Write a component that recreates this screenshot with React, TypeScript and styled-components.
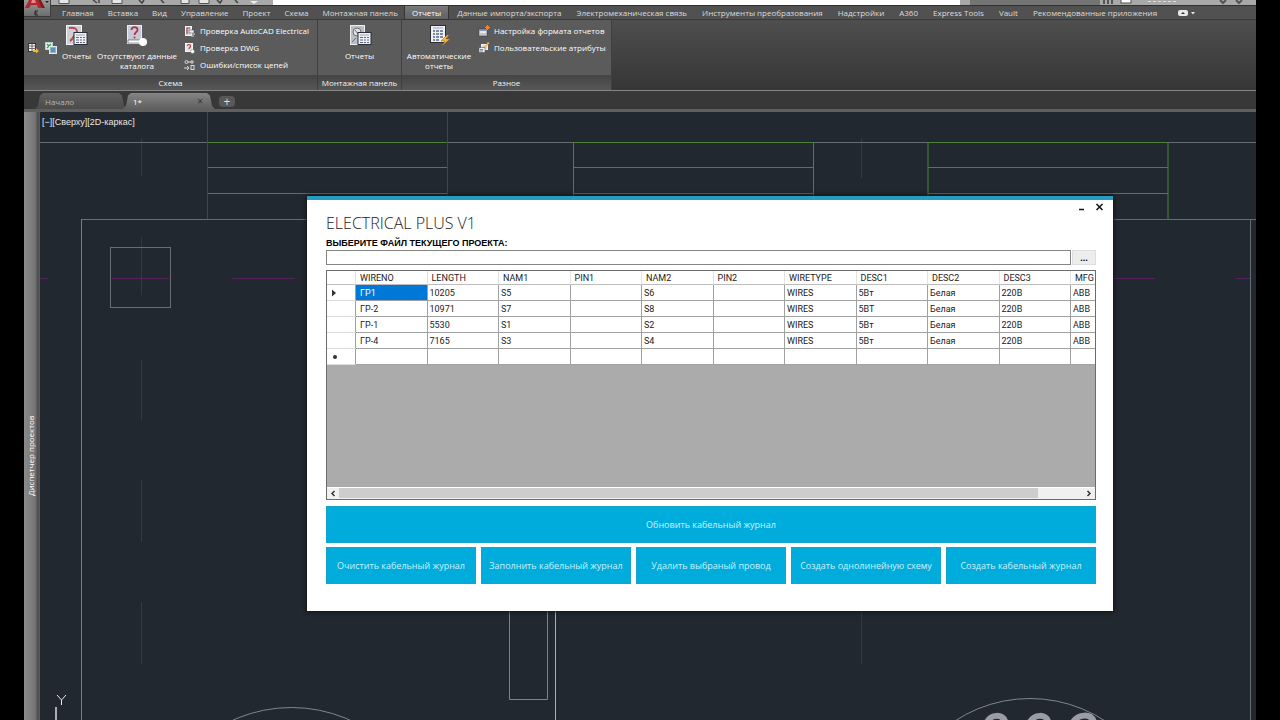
import React from 'react';
import styled, { createGlobalStyle } from 'styled-components';

const uiFont = "'Open Sans', 'Noto Sans', sans-serif";

const GlobalStyle = createGlobalStyle`
  * { box-sizing: border-box; }
  body { margin: 0; background: #000; font-family: ${uiFont}; font-size: 8px; }
  button, input { font: inherit; color: inherit; margin: 0; }
  button { border: 0; padding: 0; background: none; cursor: pointer; }
`;

/* ---------- application frame ---------- */

const AppWindow = styled.div`
  position: relative;
  display: flex;
  flex-direction: column;
  height: 100vh;
  margin: 0 24px;
  overflow: hidden;
  background: #383838;
`;

const QuickAccess = styled.header`
  display: flex;
  height: 5px;
  padding-left: 27px;
  background: #a9a9a9;
`;

const QuickIcons = styled.svg`
  width: 222px;
  height: 5px;
`;

const TitleBox = styled.div`
  flex: 1;
  background: #fff;
`;

const SearchBox = styled.div`
  width: 130px;
  margin-left: 10px;
  background: #747474;
`;

const AccountArea = styled.svg`
  width: 156px;
  height: 5px;
`;

const AppButton = styled.button`
  position: absolute;
  top: 0;
  left: 0;
  width: 27px;
  height: 17px;
  background: linear-gradient(#9a9a9a, #6d6d6d);
  border-right: 1px solid #3f3f3f;
  border-bottom: 1px solid #3a3a3a;
  svg { display: block; }
`;

const MenuBar = styled.nav`
  display: flex;
  align-items: stretch;
  gap: 2px;
  height: 15px;
  padding-left: 31px;
  background: #515151;
  border-top: 1px solid #303030;
  border-bottom: 1px solid #3a3a3a;
  flex: none;
`;

const MenuGroup = styled.div<{ $gap: number }>`
  display: flex;
  gap: ${(p) => p.$gap}px;
`;

const MenuTab = styled.button<{ $active?: boolean }>`
  padding: 0 7px;
  line-height: 13px;
  color: ${(p) => (p.$active ? '#fff' : '#dcdcdc')};
  background: ${(p) => (p.$active ? 'linear-gradient(#7a7a7a, #606060)' : 'none')};
  box-shadow: ${(p) => (p.$active ? '0 0 0 1px #353535' : 'none')};
  white-space: nowrap;
`;

const MenuMore = styled.button`
  margin-left: 12px;
  svg { display: block; }
`;

/* ---------- ribbon ---------- */

const Ribbon = styled.section`
  display: flex;
  flex: none;
  height: 71px;
  background: linear-gradient(#4e4e4e, #363636);
  border-bottom: 1px solid #868686;
`;

const Panel = styled.div<{ $width: number }>`
  display: flex;
  flex-direction: column;
  width: ${(p) => p.$width}px;
  background: #5b5b5b;
  border-right: 1px solid #404040;
`;

const PanelBody = styled.div<{ $center?: boolean }>`
  display: flex;
  flex: 1;
  justify-content: ${(p) => (p.$center ? 'center' : 'flex-start')};
  padding: 4px 4px 0;
`;

const PanelTitle = styled.div`
  height: 15px;
  line-height: 16px;
  text-align: center;
  color: #f4f4f4;
  background: linear-gradient(#444, #575757);
  white-space: nowrap;
`;

const MiniTools = styled.div`
  display: flex;
  gap: 6px;
  padding-top: 18px;
  button { height: 12px; }
  svg { display: block; }
`;

const BigTool = styled.button<{ $width: number }>`
  display: flex;
  flex-direction: column;
  align-items: center;
  width: ${(p) => p.$width}px;
  line-height: 10px;
  color: #fff;
  white-space: pre;
  svg { margin-bottom: 3px; }
`;

const ToolList = styled.div`
  display: flex;
  flex-direction: column;
  padding-left: 6px;
`;

const ToolRow = styled.button`
  display: flex;
  align-items: center;
  gap: 4px;
  height: 17px;
  padding-bottom: 4px;
  color: #fff;
  white-space: nowrap;
`;

/* ---------- drawing tabs ---------- */

const FileTabs = styled.div`
  display: flex;
  align-items: flex-end;
  flex: none;
  height: 21px;
  padding-left: 11px;
  background: #383838;
  border-bottom: 3px solid #5f5f5f;
`;

const FileTab = styled.button<{ $active?: boolean }>`
  display: flex;
  align-items: center;
  justify-content: space-between;
  width: 92px;
  height: 16px;
  padding: 0 12px 0 10px;
  margin-right: -4px;
  clip-path: polygon(0 100%, 3px 80%, 5px 15%, 8px 0, calc(100% - 8px) 0, calc(100% - 5px) 15%, calc(100% - 3px) 80%, 100% 100%);
  color: ${(p) => (p.$active ? '#fff' : '#b5b5b5')};
  background: ${(p) => (p.$active ? 'linear-gradient(#858585, #5f5f5f)' : 'linear-gradient(#606060, #4b4b4b)')};
`;

const CloseMark = styled.span`
  color: #333;
  font-size: 10px;
`;

const AddTab = styled.button`
  width: 16px;
  height: 11px;
  margin: 0 0 2px 8px;
  border-radius: 4px;
  background: #585858;
  color: #ddd;
  font-size: 12px;
  line-height: 11px;
`;

/* ---------- work area ---------- */

const Workspace = styled.main`
  display: flex;
  flex: 1;
  min-height: 0;
`;

const SidePalette = styled.aside`
  display: flex;
  justify-content: center;
  width: 16px;
  padding: 300px 2px 0 0;
  background: linear-gradient(90deg, #8b8b8b, #757575 70%, #4f4f4f 84%, #5a5a5a);
  color: #fff;
  line-height: 14px;
  span { writing-mode: vertical-rl; transform: rotate(180deg); white-space: nowrap; height: 84px; }
`;

const Canvas = styled.div`
  position: relative;
  flex: 1;
  overflow: hidden;
  background: #22282f;
`;

const Drawing = styled.svg`
  position: absolute;
  inset: 0;
  width: 100%;
  height: 100%;
`;

const ViewLabel = styled.div`
  position: relative;
  padding: 4px 2px;
  font: 9px/12px 'Liberation Sans', Arial, sans-serif;
  color: #e6e6e6;
`;

/* ---------- dialog ---------- */

const Dialog = styled.section`
  position: absolute;
  top: 84px;
  left: 267px;
  right: 143px;
  padding: 0 17px 27px 19px;
  background: #fff;
  border-top: 4px solid #259dc2;
  box-shadow: 0 0 4px 1px #101418;
`;

const WindowControls = styled.div`
  display: flex;
  justify-content: flex-end;
  gap: 2px;
  height: 13px;
  margin-right: -12px;
  svg { display: block; }
`;

const DialogTitle = styled.h1`
  margin: 0;
  font-size: 16px;
  font-weight: 300;
  line-height: 20px;
  color: #222;
`;

const FileLabel = styled.label`
  display: block;
  margin-top: 4px;
  font: bold 9px/12px 'Liberation Sans', Arial, sans-serif;
  color: #000;
`;

const FileRow = styled.div`
  display: flex;
  gap: 1px;
  margin-top: 1px;
`;

const FileInput = styled.input`
  flex: 1;
  min-width: 0;
  height: 15px;
  border: 1px solid #858585;
  background: #fff;
`;

const BrowseButton = styled.button`
  width: 24px;
  background: #ededed;
  border: 1px solid #dedede;
  color: #000;
  font-size: 9px;
  font-weight: 700;
  line-height: 12px;
`;

const GridFrame = styled.div`
  display: flex;
  flex-direction: column;
  height: 230px;
  margin-top: 5px;
  border: 1px solid #6b6b6b;
  background: #ababab;
`;

const DataTable = styled.table`
  width: 100%;
  table-layout: fixed;
  border-collapse: separate;
  border-spacing: 0;
  background: #fff;
  font: 9px/12px Roboto, 'Liberation Sans', sans-serif;
  color: #222;
  th:last-child, td:last-child { border-right: 0; }
`;

const MarkerCol = styled.col`
  width: 29px;
`;

const LastCol = styled.col`
  width: 24px;
`;

const HeadCell = styled.th`
  height: 14px;
  padding: 0 0 0 4px;
  border-right: 1px solid #e2e2e2;
  border-bottom: 1px solid #bdbdbd;
  font-weight: 400;
  text-align: left;
  white-space: nowrap;
`;

const MarkerCell = styled.th`
  height: 16px;
  padding: 0 0 0 4px;
  border-right: 1px solid #a0a0a0;
  border-bottom: 1px solid #dcdcdc;
  text-align: left;
  svg { display: block; }
`;

const Cell = styled.td<{ $selected?: boolean; $first?: boolean }>`
  height: 16px;
  padding: 0 0 0 ${(p) => (p.$first ? 4 : 2)}px;
  border-right: 1px solid #a0a0a0;
  border-bottom: 1px solid #a0a0a0;
  background: ${(p) => (p.$selected ? '#0078d7' : '#fff')};
  color: ${(p) => (p.$selected ? '#fff' : 'inherit')};
  white-space: nowrap;
`;

const ScrollBar = styled.div`
  display: flex;
  align-items: stretch;
  height: 12px;
  margin-top: auto;
  background: #f0f0f0;
  border-top: 1px solid #fff;
  svg { display: block; }
`;

const ScrollTrack = styled.div`
  flex: 1;
`;

const ScrollThumb = styled.div`
  width: 94%;
  height: 10px;
  background: #cdcdcd;
`;

const Actions = styled.div`
  display: grid;
  grid-template-columns: repeat(5, 1fr);
  gap: 4px 5px;
  margin-top: 6px;
`;

const ActionButton = styled.button<{ $wide?: boolean }>`
  grid-column: ${(p) => (p.$wide ? '1 / -1' : 'auto')};
  height: 37px;
  background: #00acdc;
  border: 1px solid #18a3cb;
  color: #c8f3ff;
  font-size: 9px;
  white-space: nowrap;
`;

/* ---------- data ---------- */

const coreMenu = ['Главная', 'Вставка', 'Вид', 'Управление', 'Проект', 'Схема', 'Монтажная панель', 'Отчеты'];

const extraMenu = [
  'Данные импорта/экспорта', 'Электромеханическая связь', 'Инструменты преобразования',
  'Надстройки', 'A360', 'Express Tools', 'Vault', 'Рекомендованные приложения',
];

const columns = ['WIRENO', 'LENGTH', 'NAM1', 'PIN1', 'NAM2', 'PIN2', 'WIRETYPE', 'DESC1', 'DESC2', 'DESC3', 'MFG'];

const rows = [
  ['ГР1', '10205', 'S5', '', 'S6', '', 'WIRES', '5Вт', 'Белая', '220В', 'ABB'],
  ['ГР-2', '10971', 'S7', '', 'S8', '', 'WIRES', '5ВТ', 'Белая', '220В', 'ABB'],
  ['ГР-1', '5530', 'S1', '', 'S2', '', 'WIRES', '5Вт', 'Белая', '220В', 'ABB'],
  ['ГР-4', '7165', 'S3', '', 'S4', '', 'WIRES', '5Вт', 'Белая', '220В', 'ABB'],
  ['', '', '', '', '', '', '', '', '', '', ''],
];

const actions = [
  'Очистить кабельный журнал', 'Заполнить кабельный журнал', 'Удалить выбраный провод',
  'Создать однолинейную схему', 'Создать кабельный журнал',
];

/* ---------- icons ---------- */

const TableSheet = ({ x, y }: { x: number; y: number }) => (
  <g transform={`translate(${x} ${y})`}>
    <rect width="13" height="12" fill="#eef1f6" stroke="#2c2f36" />
    <path d="M2 2.5h9" stroke="#9aa3b5" />
    <path d="M2 5h3M6 5h2M9 5h2M2 7.500h3M6 7.500h2M9 7.500h2M2 10h3M6 10h2M9 10h2" stroke="#5c6684" />
  </g>
);

const ReportsIcon = () => (
  <svg width="24" height="24" viewBox="0 0 24 24">
    <rect x="1.500" y="1.500" width="15" height="19" fill="#ccd0d8" stroke="#f5f5f5" />
    <path d="M4 4c6-1 8 1 8 4s-2 2-3 4-2 4-4 5" fill="none" stroke="#c4454b" strokeWidth="2" />
    <TableSheet x={9} y={8.5} />
  </svg>
);

const MissingIcon = () => (
  <svg width="24" height="24" viewBox="0 0 24 24">
    <rect x="2.500" y="1.500" width="14" height="18" fill="#c5cad8" stroke="#eceef2" />
    <path d="M6.500 6c0-4 6.500-3.500 6 0c0 2-3 2.500-3 5" fill="none" stroke="#b8323c" strokeWidth="1.800" />
    <circle cx="9.500" cy="13.500" r="1" fill="#b8323c" />
    <rect x="3" y="16" width="13" height="3" fill="#fff" stroke="#2f2f2f" strokeWidth=".5" />
    <circle cx="18" cy="18" r="4" fill="#fff" />
  </svg>
);

const PanelReportsIcon = () => (
  <svg width="24" height="24" viewBox="0 0 24 24">
    <rect x="2.500" y="1.500" width="14" height="19" fill="#b9bdc4" stroke="#eee" />
    <circle cx="9" cy="8" r="4" fill="#dfe2e6" stroke="#6b6f76" />
    <path d="M7 6l3 4M4 18l4-4" stroke="#6b6f76" />
    <TableSheet x={10} y={8.5} />
  </svg>
);

const Bolt = ({ x, y }: { x: number; y: number }) => (
  <path transform={`translate(${x} ${y})`} d="M6 0L0 6h4L1 11l8-7H5l3-4z" fill="#f3b544" stroke="#8a5a17" strokeWidth=".5" />
);

const AutoReportsIcon = () => (
  <svg width="24" height="24" viewBox="0 0 24 24">
    <rect x="3.500" y="1.500" width="15" height="17" fill="#eef0f5" stroke="#2c2f36" />
    <path d="M6 4h10" stroke="#9aa3b5" />
    <path d="M6 7h2M9 7h3M13 7h3M6 10h2M9 10h3M13 10h3M6 13h2M9 13h3M13 13h3M6 16h2M9 16h3" stroke="#5c6684" strokeWidth="1.500" />
    <Bolt x={14} y={11} />
  </svg>
);

const MiniGridIcon = () => (
  <svg width="11" height="12" viewBox="0 0 11 12">
    <rect x=".5" y="1.500" width="7" height="8" fill="#eee" stroke="#333" />
    <path d="M1 4h7M1 6.500h7M4 2v8" stroke="#555" strokeWidth=".8" />
    <path d="M5 8h3V6l3 3-3 2.500V10H5z" fill="#f0b23c" />
  </svg>
);

const MiniExportIcon = () => (
  <svg width="12" height="12" viewBox="0 0 12 12">
    <rect x=".5" y=".5" width="7" height="7" fill="#e5f1e5" stroke="#bcd" />
    <path d="M2 2l4 4M6 2L2 6" stroke="#3c9c50" strokeWidth="1.300" />
    <rect x="4.500" y="4.500" width="7" height="7" fill="#8fb4cf" stroke="#dfe8ef" />
    <path d="M6 9h4M6 7h4" stroke="#3f6d8f" />
  </svg>
);

const CheckAeIcon = () => (
  <svg width="12" height="12" viewBox="0 0 12 12">
    <rect x="1.500" y="1.500" width="6" height="9" fill="#d9d9dd" stroke="#f3f3f3" />
    <path d="M3 9V3h3" fill="none" stroke="#a63f47" strokeWidth="1.200" />
    <rect x="5" y="5" width="5" height="3" fill="#eee" stroke="#444" strokeWidth=".5" />
    <path d="M7 9h4M7 11h3" stroke="#ddd" />
  </svg>
);

const CheckDwgIcon = () => (
  <svg width="12" height="12" viewBox="0 0 12 12">
    <rect x="1.500" y="1.500" width="7" height="8" fill="#e2e2e6" stroke="#f5f5f5" />
    <path d="M3.500 4c0-2 3-2 3 0S5 5 5 7" fill="none" stroke="#b03a45" strokeWidth="1.200" />
    <circle cx="8.500" cy="9.500" r="2" fill="#fff" stroke="#777" strokeWidth=".5" />
  </svg>
);

const ErrorsIcon = () => (
  <svg width="12" height="12" viewBox="0 0 12 12" fill="none" stroke="#d7dadd">
    <circle cx="2.500" cy="3" r="1.500" />
    <path d="M4 3h3M8 1v4M6 3h4M0 9h4M3 7l2 2-2 2" />
    <rect x="7" y="6.500" width="3" height="4" />
  </svg>
);

const FormatIcon = () => (
  <svg width="12" height="12" viewBox="0 0 12 12">
    <rect x="1" y="4" width="8" height="7" fill="#e6e8ee" stroke="#3a3a44" strokeWidth=".6" />
    <path d="M1.500 5h7" stroke="#6378b0" strokeWidth="1.500" />
    <path d="M3 8v3M5 8v3M7 8v3" stroke="#777" strokeWidth=".6" />
    <path d="M8 1l3 3M11 1L8 4M9.500 0v5M7 2.500h5" stroke="#e8833a" strokeWidth="1" />
  </svg>
);

const AttributesIcon = () => (
  <svg width="12" height="12" viewBox="0 0 12 12">
    <rect x="3.500" y="2.500" width="6" height="5" fill="#d9dbe0" stroke="#f3f3f3" />
    <rect x="1" y="5.500" width="6" height="5" fill="#eceef2" stroke="#55585f" strokeWidth=".6" />
    <path d="M2 7.500h3M2 9h3" stroke="#555" strokeWidth=".7" />
    <path d="M6 5l4-5 1.500 1-4 4.500z" fill="#f0b44a" />
  </svg>
);

/* Architectural plan behind the dialog, in window coordinates. */
const Plan = () => (
  <Drawing aria-hidden="true">
    <g transform="translate(-40 -112)" fill="none">
      <g stroke="#54225f">
        <path d="M141.500 138v38M141.500 237v58M141.500 360v60M141.500 480v62M141.500 602v62M861.500 138v40M861.500 602v62" />
        <path d="M40 278.500h8M112 278.500h57M232 278.500h63M1113 278.500h42M1236 278.500h14" />
      </g>
      <g stroke="#666d74">
        <path d="M40 142.500h1400M81.500 720V219.500H1440M1250.500 219v2000" />
        <rect x="110.500" y="247.500" width="60" height="60" />
        <path d="M509.500 600v99.500h38V600" stroke="#7d848a" />
        <path d="M555.500 600v2000" stroke="#aab0b5" />
        <path d="M81.500 219v2000" stroke="#767d84" />
        <circle cx="291.500" cy="850" r="142.500" stroke="#7f868c" />
        <circle cx="1030" cy="835.500" r="137" stroke="#7f868c" />
      </g>
      <g stroke="#4b8239">
        <path d="M207 142.500h240M207 167.500h240M207 193.500h240M207 219.500h240" />
        <path d="M573.500 219.500v-77h240v77zM573.500 167.500h240M573.500 193.500h240" />
        <path d="M928 219.500v-77h240v77zM928 167.500h240M928 193.500h240" />
        <path d="M207.500 112v107M447.500 112v107" stroke="#1d5c3a" />
      </g>
      <g stroke="#9a9da6" strokeWidth="6">
        <path d="M987 722c4-8 15-8 18-1v6" />
        <path d="M1030 722c4-8 16-8 18-1v6" />
        <path d="M1073 722c5-8 18-9 21 0v6" />
      </g>
      <path d="M57 695l4.500 5 4.500-5M61.500 700v5" stroke="#e8eaec" />
      <path d="M56 707v40" stroke="#a9aeb3" strokeWidth="2" />
    </g>
  </Drawing>
);

const ElectricalDialog = () => (
  <Dialog role="dialog" aria-labelledby="dialog-title">
    <WindowControls>
      <button type="button" aria-label="Свернуть">
        <svg width="16" height="14" viewBox="0 0 16 14"><path d="M5 9.500h5" stroke="#111" strokeWidth="1.500" /></svg>
      </button>
      <button type="button" aria-label="Закрыть">
        <svg width="16" height="14" viewBox="0 0 16 14"><path d="M4.500 4l6 6M10.500 4l-6 6" stroke="#111" strokeWidth="1.500" /></svg>
      </button>
    </WindowControls>
    <DialogTitle id="dialog-title">ELECTRICAL PLUS V1</DialogTitle>
    <FileLabel htmlFor="project-file">ВЫБЕРИТЕ ФАЙЛ ТЕКУЩЕГО ПРОЕКТА:</FileLabel>
    <FileRow>
      <FileInput id="project-file" type="text" />
      <BrowseButton type="button">...</BrowseButton>
    </FileRow>
    <GridFrame>
      <DataTable>
        <colgroup>
          <MarkerCol />
          {columns.slice(1).map((c) => <col key={c} />)}
          <LastCol />
        </colgroup>
        <thead>
          <tr>
            <HeadCell aria-label="Строка" />
            {columns.map((c) => <HeadCell key={c} scope="col">{c}</HeadCell>)}
          </tr>
        </thead>
        <tbody>
          {rows.map((row, r) => (
            <tr key={r}>
              <MarkerCell scope="row">
                {r === 0 && <svg width="6" height="8" viewBox="0 0 6 8"><path d="M1 0.500v7L5 4z" fill="#333" /></svg>}
                {r === rows.length - 1 && <svg width="8" height="8" viewBox="0 0 8 8"><circle cx="4" cy="4" r="2" fill="#333" /></svg>}
              </MarkerCell>
              {row.map((value, c) => (
                <Cell key={c} $first={c === 0} $selected={r === 0 && c === 0}>{value}</Cell>
              ))}
            </tr>
          ))}
        </tbody>
      </DataTable>
      <ScrollBar>
        <button type="button" aria-label="Прокрутить влево">
          <svg width="12" height="11" viewBox="0 0 12 11"><path d="M7.500 3L5 5.500 7.500 8" fill="none" stroke="#333" strokeWidth="1.500" /></svg>
        </button>
        <ScrollTrack><ScrollThumb /></ScrollTrack>
        <button type="button" aria-label="Прокрутить вправо">
          <svg width="12" height="11" viewBox="0 0 12 11"><path d="M4.500 3L7 5.500 4.500 8" fill="none" stroke="#333" strokeWidth="1.500" /></svg>
        </button>
      </ScrollBar>
    </GridFrame>
    <Actions>
      <ActionButton type="button" $wide>Обновить кабельный журнал</ActionButton>
      {actions.map((a) => <ActionButton type="button" key={a}>{a}</ActionButton>)}
    </Actions>
  </Dialog>
);

export default function App() {
  return (
    <>
      <GlobalStyle />
      <AppWindow>
        <QuickAccess>
          <QuickIcons viewBox="0 0 222 5">
            <path d="M8 0v3.500h10V0M61 0v3.500h10V0M130 0v3.500h8V0M148 0v3.500h10V0" fill="#e6e6e6" stroke="#555" />
            <path d="M42 0l4 3M48 0v3M88 0l3 3 2-3M110 0l3 3M166 0l3 3 2-3M184 0l3 3" fill="none" stroke="#444" strokeWidth="1.500" />
            <path d="M199 1l4 3 4-3z" fill="#eee" />
          </QuickIcons>
          <TitleBox />
          <SearchBox />
          <AccountArea viewBox="0 0 156 5">
            <path d="M4 0v4M8 0v4M12 0v4M120 0l3 3 3-3M136 0l3 3 3-3" fill="none" stroke="#555" strokeWidth="2" />
            <rect x="21" y="-2" width="10" height="5" fill="#fff" stroke="#555" />
            <path d="M48 1.500h28" stroke="#ddd" strokeDasharray="3 2" />
          </AccountArea>
        </QuickAccess>
        <MenuBar>
          <MenuGroup $gap={0}>
            {coreMenu.map((m) => <MenuTab type="button" key={m} $active={m === 'Отчеты'}>{m}</MenuTab>)}
          </MenuGroup>
          <MenuGroup $gap={1}>
            {extraMenu.map((m) => <MenuTab type="button" key={m}>{m}</MenuTab>)}
          </MenuGroup>
          <MenuMore type="button" aria-label="Свернуть ленту">
            <svg width="18" height="13" viewBox="0 0 18 13">
              <rect x="0" y="4" width="10" height="6" rx="2" fill="#e8e8e8" />
              <path d="M3 8l2-2 2 2z" fill="#333" />
              <path d="M13 6h4l-2 2.500z" fill="#e8e8e8" />
            </svg>
          </MenuMore>
        </MenuBar>
        <AppButton type="button" aria-label="Меню приложения">
          <svg width="26" height="16" viewBox="0 0 26 16">
            <path d="M5 0h9l5 8h-5l-1-3H7L5 8H1z" fill="#b3262d" />
            <path d="M8 0h3l1 3H7z" fill="#e9868a" />
            <path d="M14 0h3l4 8h-3z" fill="#7e1a20" />
            <path d="M21 1h4l-2 2z" fill="#222" />
            <path d="M14 11h-3v4h3M11 13h2" fill="none" stroke="#222" />
          </svg>
        </AppButton>
        <Ribbon>
          <Panel $width={294}>
            <PanelBody>
              <MiniTools>
                <button type="button" aria-label="Вставить таблицу"><MiniGridIcon /></button>
                <button type="button" aria-label="Экспорт в таблицу"><MiniExportIcon /></button>
              </MiniTools>
              <BigTool type="button" $width={39}><ReportsIcon />Отчеты</BigTool>
              <BigTool type="button" $width={82}><MissingIcon />{'Отсутствуют данные\nкаталога'}</BigTool>
              <ToolList>
                <ToolRow type="button"><CheckAeIcon />Проверка AutoCAD Electrical</ToolRow>
                <ToolRow type="button"><CheckDwgIcon />Проверка DWG</ToolRow>
                <ToolRow type="button"><ErrorsIcon />Ошибки/список цепей</ToolRow>
              </ToolList>
            </PanelBody>
            <PanelTitle>Схема</PanelTitle>
          </Panel>
          <Panel $width={84}>
            <PanelBody $center>
              <BigTool type="button" $width={60}><PanelReportsIcon />Отчеты</BigTool>
            </PanelBody>
            <PanelTitle>Монтажная панель</PanelTitle>
          </Panel>
          <Panel $width={210}>
            <PanelBody>
              <BigTool type="button" $width={66}><AutoReportsIcon />{'Автоматические\nотчеты'}</BigTool>
              <ToolList>
                <ToolRow type="button"><FormatIcon />Настройка формата отчетов</ToolRow>
                <ToolRow type="button"><AttributesIcon />Пользовательские атрибуты</ToolRow>
              </ToolList>
            </PanelBody>
            <PanelTitle>Разное</PanelTitle>
          </Panel>
        </Ribbon>
        <FileTabs>
          <FileTab type="button">Начало</FileTab>
          <FileTab type="button" $active>1*<CloseMark>×</CloseMark></FileTab>
          <AddTab type="button" aria-label="Новый чертеж">+</AddTab>
        </FileTabs>
        <Workspace>
          <SidePalette><span>Диспетчер проектов</span></SidePalette>
          <Canvas>
            <Plan />
            <ViewLabel>[−][Сверху][2D-каркас]</ViewLabel>
            <ElectricalDialog />
          </Canvas>
        </Workspace>
      </AppWindow>
    </>
  );
}
